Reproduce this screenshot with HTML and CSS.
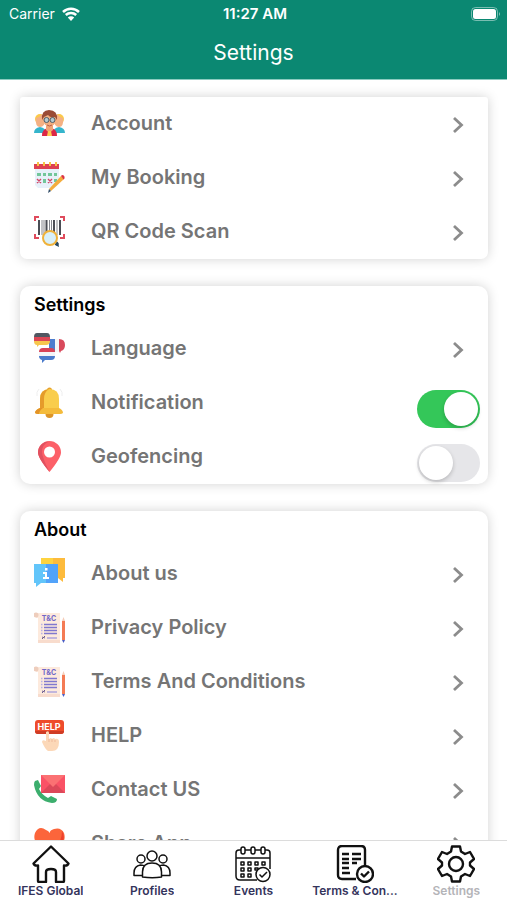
FILE: index.html
```html
<!DOCTYPE html>
<html lang="en">
<head>
    <meta charset="UTF-8">
    <meta name="viewport" content="width=device-width, initial-scale=1.0">
    <title>Settings</title>
    <link rel="stylesheet" href="styles.css">
</head>
<body>
    <svg class="sprite" aria-hidden="true">
        <symbol id="chevron" viewBox="0 0 12 18">
            <path d="M2 2l7.500 7L2 16" fill="none" stroke="#8c8c8c" stroke-width="2.800"/>
        </symbol>
        <symbol id="terms" viewBox="0 0 31 31">
            <path d="M2 1h24v30H4V6H2z" fill="#fdeadd"/>
            <path d="M4 28h22v3H4z" fill="#f8dccd"/>
            <circle cx="2" cy="3" r="2.500" fill="#eecdbc"/>
            <text x="15" y="9" class="terms-text">T&amp;C</text>
            <path d="M10 12.500h13M10 15.500h13M10 18.500h13M10 21.500h13" stroke="#8078cf" stroke-width="1.600"/>
            <path d="M7 12.500h1.500M7 15.500h1.500M7 18.500h1.500M7 21.500h1.500" stroke="#b9b0e6" stroke-width="1.600"/>
            <path d="M13 26h10" stroke="#9c93dc" stroke-width="1.200"/>
            <path d="M8 27l3-3M8 25l3 1" stroke="#6d5d90" stroke-width="1"/>
            <path d="M28 9h3v19h-3z" fill="#f47b55"/>
            <path d="M28 9l1.500-4L31 9z" fill="#f5cdb8"/>
            <path d="M28 28h3l-1.500 3z" fill="#4a5cc4"/>
        </symbol>
    </svg>

    <div class="app">
        <header class="header">
            <div class="status">
                <span class="carrier">Carrier
                    <svg class="wifi" viewBox="0 0 18 14">
                        <path d="M1 5a11.500 11.500 0 0 1 16 0M3.800 8a7.500 7.500 0 0 1 10.400 0" fill="none" stroke="#fff" stroke-width="2.500"/>
                        <path d="M9 14l-3.200-3.500a4.600 4.600 0 0 1 6.400 0z" fill="#fff"/>
                    </svg>
                </span>
                <span class="time">11:27 AM</span>
                <span class="battery">
                    <svg viewBox="0 0 30 14">
                        <rect x=".5" y=".5" width="26" height="13" rx="4" fill="none" stroke="#fff" stroke-opacity=".45"/>
                        <rect x="2" y="2" width="23" height="10" rx="2.500" fill="#fff"/>
                        <path d="M28 5q2 2 0 4z" fill="#fff" fill-opacity=".5"/>
                    </svg>
                </span>
            </div>
            <h1>Settings</h1>
        </header>

        <main class="content">
            <section class="card">
                <a href="#account" class="row">
                    <svg class="icon" viewBox="0 0 31 31">
                        <circle cx="6" cy="11" r="5" fill="#fbc94b"/>
                        <circle cx="25" cy="11" r="5" fill="#fbc94b"/>
                        <path d="M2 10q4-1 6-4l3 6q0 7-5 7t-4-9zM29 10q-4-1-6-4l-3 6q0 7 5 7t4-9z" fill="#f4b184"/>
                        <path d="M0 25q0-5 6-6 6 1 6 6zM19 25q0-5 6-6 6 1 6 6z" fill="#35b5cc"/>
                        <path d="M8 28q0-8 7.500-8t7.500 8z" fill="#dc2747"/>
                        <path d="M12 17h7v5l-3.500 3-3.500-3z" fill="#f0a475"/>
                        <path d="M14 23h3l1 5h-5z" fill="#ffc94f"/>
                        <circle cx="15.500" cy="12" r="6.500" fill="#f2af80"/>
                        <path d="M8 12Q7 2 15 2q9 0 8 10l-2-3q-5 1-7-2l-4 2z" fill="#9a4b35"/>
                        <g fill="#b6cad0" stroke="#505b66">
                            <circle cx="12.500" cy="12" r="2.500"/>
                            <circle cx="18.500" cy="12" r="2.500"/>
                        </g>
                        <path d="M13 17q2.500 2 5 0" fill="none" stroke="#bd5944"/>
                    </svg>
                    <span class="label">Account</span>
                    <svg class="chevron"><use href="#chevron"/></svg>
                </a>
                <a href="#booking" class="row">
                    <svg class="icon" viewBox="0 0 31 31">
                        <path d="M1 3h24v19l-5 4H4l-3-3z" fill="#e7f1fa"/>
                        <path d="M0 2h25v5H0z" fill="#dd4152"/>
                        <path d="M4 0v4M10 0v4M16 0v4M22 0v4" stroke="#f7c445" stroke-width="2"/>
                        <path d="M3 11h4v3H3zM9 11h3v3H9zM14 11h4v3h-4zM20 11h3v3h-3zM9 17h3v4H9zM20 17h3v3h-3z" fill="#72c69a"/>
                        <path d="M3 17l4 4m0-4l-4 4M14 17l4 4m0-4l-4 4" stroke="#d34668" stroke-width="1.400"/>
                        <path d="M15 27L27 14l3 3-13 12z" fill="#f4ad3d"/>
                        <path d="M27 14l1-1q3 0 2.500 3.500l-1 1z" fill="#dc3445"/>
                        <path d="M15 27l-1 4 3-2z" fill="#334e68"/>
                    </svg>
                    <span class="label">My Booking</span>
                    <svg class="chevron"><use href="#chevron"/></svg>
                </a>
                <a href="#scan" class="row">
                    <svg class="icon" viewBox="0 0 31 31">
                        <path d="M1 5V1h4M26 1h4v4M1 18v4h4M26 22h4v-4" fill="none" stroke="#df4b5c" stroke-width="2"/>
                        <path d="M5 4v15M12.500 4v15M20 4v15M26 4v15" stroke="#4a4d55" stroke-width="2"/>
                        <path d="M8 4v15M10 4v15M15.500 4v13M17.500 4v13M23 4v15" stroke="#85878e" stroke-width="1"/>
                        <path d="M20 26l2-2 3 4-2 2z" fill="#3b5a73"/>
                        <path d="M21 27l3-1 1 5-4-2z" fill="#274861"/>
                        <circle cx="16" cy="22" r="7" fill="#d8f0fa" stroke="#efb23b" stroke-width="2"/>
                    </svg>
                    <span class="label">QR Code Scan</span>
                    <svg class="chevron"><use href="#chevron"/></svg>
                </a>
            </section>

            <section class="card">
                <h2>Settings</h2>
                <a href="#language" class="row">
                    <svg class="icon" viewBox="0 0 31 31">
                        <path d="M15 6h6v13h-6z" fill="#4d7dce"/>
                        <path d="M21 6h4v13h-4z" fill="#f5f5f5"/>
                        <path d="M25 6q6 0 6 6 0 5-4 6l-1 2-1-2z" fill="#d94a5c"/>
                        <path d="M3 0h10q3 0 3 4H0q0-4 3-4z" fill="#515761"/>
                        <path d="M0 4h16v4H0z" fill="#dc4655"/>
                        <path d="M0 8h16q0 4-4 4H5l-2 2v-2q-3 0-3-4z" fill="#f7c64d"/>
                        <path d="M5 19q0-4 4-4h8q4 0 4 4z" fill="#d84357"/>
                        <path d="M5 19h16v4H5z" fill="#f3f4f7"/>
                        <path d="M5 23h16q0 4-4 4h-6l-3 3v-3q-3-1-3-4z" fill="#4a7bcc"/>
                    </svg>
                    <span class="label">Language</span>
                    <svg class="chevron"><use href="#chevron"/></svg>
                </a>
                <div class="row">
                    <svg class="icon" viewBox="0 0 31 31">
                        <circle cx="15.500" cy="27" r="4" fill="#dc9428"/>
                        <circle cx="15.500" cy="3" r="2.500" fill="#e7a12c"/>
                        <path d="M6 22V12q0-10 9.500-10T25 12v10z" fill="#f9cd4c"/>
                        <path d="M6 22V12q0-9 9-10-5 3-5 10v10z" fill="#e59b2b"/>
                        <path d="M1 26q0-3 5-5h19q4 2 4 5-1 1-3 1H4q-2 0-3-1z" fill="#f4bb3b"/>
                        <path d="M1 26q0-3 5-5h3q-4 3-4 6-3 0-4-1z" fill="#e39327"/>
                        <path d="M3 9q-1-4 2-7M28 9q1-4-2-7" fill="none" stroke="#eeeeee"/>
                    </svg>
                    <label class="label" for="notification">Notification</label>
                    <input type="checkbox" class="switch" id="notification" checked>
                </div>
                <div class="row">
                    <svg class="icon" viewBox="0 0 31 31">
                        <path d="M15.500 31Q4 17 4 11.500a11 11 0 0 1 23 0Q27 17 15.500 31z" fill="#fc6068"/>
                        <path d="M15.500 31Q4 17 4 11.500A11 11 0 0 1 15 .5q-7 3-7 10.500 0 5 7.500 20z" fill="#e15160"/>
                        <circle cx="15.500" cy="11" r="5.500" fill="#fff"/>
                    </svg>
                    <label class="label" for="geofencing">Geofencing</label>
                    <input type="checkbox" class="switch" id="geofencing">
                </div>
            </section>

            <section class="card">
                <h2>About</h2>
                <a href="#about" class="row">
                    <svg class="icon" viewBox="0 0 31 31">
                        <path d="M7 0h12v19H7z" fill="#fed33f"/>
                        <path d="M19 0h12v20h-2v4l-5-4h-5z" fill="#fdbb3c"/>
                        <path d="M0 6h12v19H7l-5 4v-4H0z" fill="#62c5fa"/>
                        <path d="M12 6h12v19H12z" fill="#52a3fa"/>
                        <path d="M11 10h2.500v2.500H11zM9 14h4v5h2v2H9v-2h2v-3H9z" fill="#fff"/>
                    </svg>
                    <span class="label">About us</span>
                    <svg class="chevron"><use href="#chevron"/></svg>
                </a>
                <a href="#privacy" class="row">
                    <svg class="icon"><use href="#terms"/></svg>
                    <span class="label">Privacy Policy</span>
                    <svg class="chevron"><use href="#chevron"/></svg>
                </a>
                <a href="#terms-conditions" class="row">
                    <svg class="icon"><use href="#terms"/></svg>
                    <span class="label">Terms And Conditions</span>
                    <svg class="chevron"><use href="#chevron"/></svg>
                </a>
                <a href="#help" class="row">
                    <svg class="icon" viewBox="0 0 31 31">
                        <rect x="1" y="0" width="29" height="14" rx="3" fill="#ee4b2b"/>
                        <path d="M1 11h29q0 3-3 3H4q-3 0-3-3z" fill="#cf3c25"/>
                        <text x="15" y="10" class="help-text">HELP</text>
                        <path d="M12 12q3-2 3 1v6q2-2 3 0 2-2 3 0 4-1 4 3 0 9-7 9h-4q-3-2-6-9 0-3 4-1z" fill="#fcd8b8"/>
                        <path d="M15 19v3M18 19v3M21 20v2" stroke="#efb99a"/>
                    </svg>
                    <span class="label">HELP</span>
                    <svg class="chevron"><use href="#chevron"/></svg>
                </a>
                <a href="#contact" class="row">
                    <svg class="icon" viewBox="0 0 31 31">
                        <path d="M1 7l3-1 3 6-2 3q3 6 9 9l3-2 6 3q0 4-5 4Q3 27 0 11q0-3 1-4z" fill="#3cae6d"/>
                        <path d="M7 1h24v18H7z" fill="#fa5266"/>
                        <path d="M7 19l9-9h6l9 9z" fill="#dc4859"/>
                        <path d="M7 1h24L19 13z" fill="#fb7173"/>
                    </svg>
                    <span class="label">Contact US</span>
                    <svg class="chevron"><use href="#chevron"/></svg>
                </a>
                <a href="#share" class="row">
                    <svg class="icon" viewBox="0 0 31 31">
                        <path d="M15.500 29L3 16Q-1 11 1 5q4-8 11-3 3 1 3.500 3Q16 2 20 1q7-2 10 4 2 6-2 11z" fill="#fc653b"/>
                        <path d="M28 3q4 7-1 13L15.500 29l-3-3Q28 18 28 3z" fill="#ed402d"/>
                    </svg>
                    <span class="label">Share App</span>
                    <svg class="chevron"><use href="#chevron"/></svg>
                </a>
            </section>
        </main>

        <nav class="tabs">
            <a href="#home" class="tab">
                <svg viewBox="0 0 38 38" stroke-width="2.400">
                    <path d="M19 1.500L1.500 18.500q1 2.500 4.500 2V36q0 1 1 1h7V27q0-3 5-3t5 3v10h7q1 0 1-1V20.500q3.500.5 4.500-2z"/>
                </svg>
                <span>IFES Global</span>
            </a>
            <a href="#profiles" class="tab">
                <svg viewBox="0 0 38 38" stroke-width="1.500">
                    <circle cx="19" cy="11" r="5"/>
                    <circle cx="8" cy="14" r="4"/>
                    <circle cx="30" cy="14" r="4"/>
                    <path d="M9.500 32v-5q0-9 9.500-9t9.500 9v5q-9 1.500-19 0zM9 30.500H1V28q0-7 6.500-8 3 0 4.500 1.500M29 30.500h8V28q0-7-6.500-8-3 0-4.500 1.500"/>
                </svg>
                <span>Profiles</span>
            </a>
            <a href="#events" class="tab">
                <svg viewBox="0 0 38 38" stroke-width="1.500">
                    <path d="M23 35H6q-4 0-4-4V8q0-3 3-3h2M11 5h6M21 5h6M31 5h2q3 0 3 3v16M2 13h34"/>
                    <rect x="7" y="2" width="4" height="7" rx="2"/>
                    <rect x="17" y="2" width="4" height="7" rx="2"/>
                    <rect x="27" y="2" width="4" height="7" rx="2"/>
                    <path d="M7 17h3v3H7zM14 17h3v3h-3zM21 17h3v3h-3zM28 17h3v3h-3zM7 23h3v3H7zM14 23h3v3h-3zM21 23h3v2h-3zM7 29h3v3H7zM14 29h3v3h-3z"/>
                    <circle cx="29" cy="29.500" r="7" fill="#fff"/>
                    <path d="M25.500 29.500l2.500 2.500 5-5"/>
                </svg>
                <span>Events</span>
            </a>
            <a href="#terms-tab" class="tab">
                <svg viewBox="0 0 38 38" stroke-width="2.400">
                    <path d="M20 34H6q-4 0-4-4V5q0-4 4-4h19q4 0 4 4v15M6 9h7M6 14h7M6 18h7M6 23h7M6 28h8M16 9h9M16 14h9M16 18h5"/>
                    <circle cx="29" cy="29" r="8" fill="#fff"/>
                    <path d="M25 28.500l3 3 5-5"/>
                </svg>
                <span>Terms &amp; Con...</span>
            </a>
            <a href="#settings" class="tab active">
                <svg viewBox="0 0 38 38" stroke-width="2.400">
                    <path d="M15 1.500h8l1 5 4 2.500 5-2 4 7-4 3.500v3L37 24l-4 7-5-2-4 2.500-1 5h-8l-1-5-4-2.500-5 2-4-7 4-3.500v-3L1 14l4-7 5 2 4-2.500z"/>
                    <circle cx="19" cy="19" r="7"/>
                </svg>
                <span>Settings</span>
            </a>
        </nav>
    </div>
</body>
</html>
```
FILE: styles.css
```css
* {
    box-sizing: border-box;
}
body {
    margin: 0;
    font-family: Inter, "Liberation Sans", sans-serif;
    background: #fff;
}
a {
    color: inherit;
    text-decoration: none;
}
.sprite {
    display: none;
}
.app {
    display: flex;
    flex-direction: column;
    height: 100vh;
}
.header {
    flex: none;
    background: #0b8872;
    color: #fff;
    padding-bottom: 10px;
    border-bottom: 1px solid #8ccbc0;
}
.status {
    display: grid;
    grid-template-columns: 1fr auto 1fr;
    align-items: center;
    height: 27px;
    padding: 0 6px 0 9px;
    font-size: 14px;
}
.carrier {
    display: flex;
    align-items: center;
    gap: 7px;
}
.wifi {
    width: 18px;
    height: 14px;
}
.time {
    font-size: 15px;
    font-weight: 600;
}
.battery {
    display: flex;
    justify-content: flex-end;
}
.battery svg {
    width: 30px;
    height: 14px;
}
h1 {
    margin: 10px 0 0;
    font-size: 21px;
    line-height: 32px;
    font-weight: 400;
    text-align: center;
}
.content {
    flex: 1;
    min-height: 0;
    overflow-y: auto;
    scrollbar-width: none;
    display: flex;
    flex-direction: column;
    gap: 27px;
    padding: 17px 19px 27px 20px;
}
.card {
    flex: none;
    background: #fff;
    border-radius: 10px;
    box-shadow: 0 0 12px rgba(0, 0, 0, 0.18);
}
.card:first-child {
    border-radius: 3px 3px 7px 7px;
}
h2 {
    margin: 0;
    padding: 2px 14px 0;
    font-size: 18px;
    line-height: 34px;
    font-weight: 600;
    color: #000;
}
.row {
    display: flex;
    align-items: center;
    height: 54px;
    padding: 0 24px 2px 14px;
    color: #757575;
}
.icon {
    flex: none;
    width: 31px;
    height: 31px;
    margin-right: 26px;
}
.label {
    flex: 1;
    font-size: 20px;
    font-weight: 600;
}
.chevron {
    width: 12px;
    height: 18px;
    margin-top: 4px;
}
.row:has(.switch) {
    padding-right: 8px;
}
.switch {
    appearance: none;
    align-self: flex-end;
    width: 63px;
    height: 38px;
    margin: 0;
    padding: 2px;
    border-radius: 19px;
    background: #e6e6e9;
}
.switch::before {
    content: "";
    display: block;
    width: 34px;
    height: 34px;
    border-radius: 50%;
    background: #fff;
    box-shadow: 0 2px 4px rgba(0, 0, 0, 0.2);
}
.switch:checked {
    background: #34c759;
}
.switch:checked::before {
    margin-left: auto;
}
.terms-text {
    font: 700 7px Inter, sans-serif;
    fill: #7167c8;
    text-anchor: middle;
}
.help-text {
    font: 700 9px Inter, sans-serif;
    fill: #fff;
    text-anchor: middle;
}
.tabs {
    flex: none;
    display: grid;
    grid-template-columns: repeat(5, 1fr);
    height: 60px;
    padding-top: 4px;
    background: #fff;
    border-top: 1px solid #dcdcdc;
}
.tab {
    display: flex;
    flex-direction: column;
    align-items: center;
    min-width: 0;
    padding: 0 6px;
    font-size: 12px;
    line-height: 16px;
    font-weight: 600;
    color: #34345c;
}
.tab svg {
    width: 38px;
    height: 38px;
    fill: none;
    stroke: #111;
    stroke-linejoin: round;
}
.tab span {
    max-width: 100%;
    overflow: hidden;
    text-overflow: ellipsis;
    white-space: nowrap;
}
.tab.active {
    color: #b4b4b8;
}
```
